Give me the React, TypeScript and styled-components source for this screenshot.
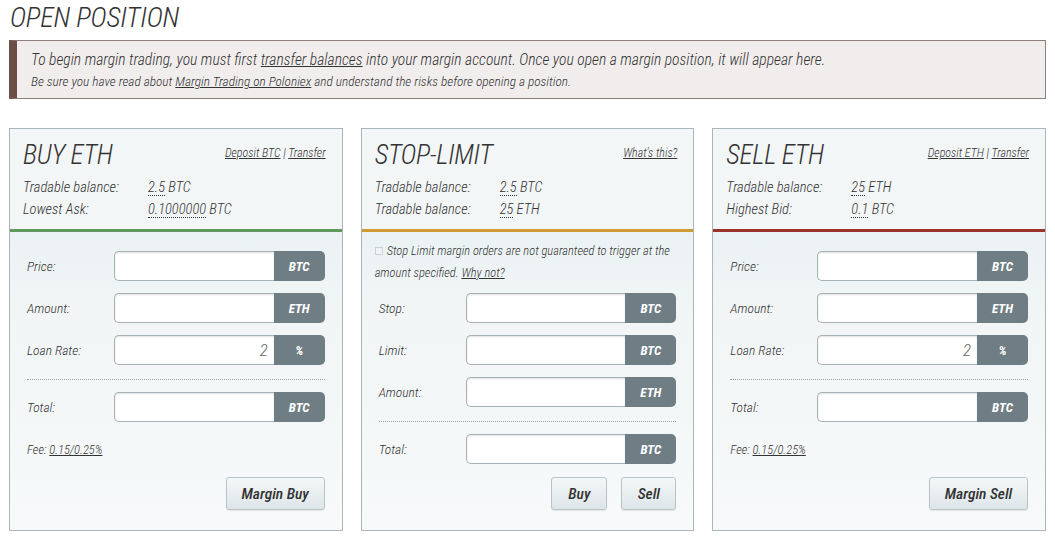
import React from "react";
import styled, { createGlobalStyle } from "styled-components";

const FONT = `"Roboto Condensed", Roboto, "Liberation Sans Narrow", sans-serif`;

const Global = createGlobalStyle`
  html, body { margin: 0; padding: 0; background: #ffffff; }
  body {
    font-family: ${FONT};
    font-stretch: condensed;
    font-style: italic;
    font-weight: 300;
    color: #333;
  }
  * { box-sizing: border-box; }
`;

const Page = styled.div`
  width: 1055px;
  padding: 0 9px 0 9px;
`;

const PageTitle = styled.h1`
  margin: 0;
  padding: 3px 0 0 1px;
  height: 40px;
  font-size: 28px;
  line-height: 30px;
  font-weight: 300;
  font-style: italic;
  text-transform: uppercase;
  letter-spacing: -0.2px;
  color: #333;
`;

const Notice = styled.div`
  height: 59px;
  background: #f1eded;
  border: 1px solid #8d7f7c;
  border-left: 8px solid #6b4e48;
  padding: 9px 14px 0 14px;
`;

const NoticeMain = styled.div`
  font-size: 15.6px;
  line-height: 20px;
`;

const NoticeSub = styled.div`
  font-size: 13.3px;
  line-height: 20px;
  margin-top: 2px;
`;

const Link = styled.a`
  color: #333;
  text-decoration: underline;
  cursor: pointer;
`;

const Panels = styled.div`
  margin-top: 29px;
  display: grid;
  grid-template-columns: repeat(3, 1fr);
  gap: 18px;
  width: 1037px;
`;

const Panel = styled.div`
  height: 403px;
  border: 1px solid #a9b6ba;
  display: flex;
  flex-direction: column;
  background: linear-gradient(to bottom, #e2eef0 0%, #f1f5f6 45%, #f7f9fa 100%);
`;

const Head = styled.div<{ $accent: string }>`
  height: 103px;
  background: #f3f6f7;
  border-bottom: 3px solid ${(p) => p.$accent};
  padding: 11px 16px 0 13px;
`;

const HeadTop = styled.div`
  display: flex;
  justify-content: space-between;
  align-items: center;
  height: 30px;
  margin-bottom: 7px;
`;

const PanelTitle = styled.h2`
  margin: 0;
  font-size: 27px;
  line-height: 30px;
  font-weight: 300;
  font-style: italic;
  letter-spacing: -0.3px;
`;

const HeadLinks = styled.div`
  font-size: 12px;
  margin-top: -4px;
`;

const BalRow = styled.div`
  display: flex;
  font-size: 14.5px;
  line-height: 22px;
`;

const BalLabel = styled.span`
  width: 125px;
`;

const Dotted = styled.span`
  border-bottom: 1px dotted #333;
  line-height: 15px;
  display: inline-block;
`;

const Body = styled.div<{ $top: number }>`
  flex: 1;
  display: flex;
  flex-direction: column;
  padding: ${(p) => p.$top}px 17px 0 17px;
`;

const Row = styled.div`
  display: flex;
  align-items: center;
  height: 30px;
  margin-bottom: 12px;
`;

const Label = styled.span`
  width: 87px;
  font-size: 13.5px;
`;

const InputGroup = styled.div`
  flex: 1;
  display: flex;
  height: 30px;
`;

const Field = styled.div`
  flex: 1;
  background: #fff;
  border: 1px solid #a6b1b5;
  border-right: none;
  border-radius: 5px 0 0 5px;
  box-shadow: inset 0 1px 2px rgba(0, 0, 0, 0.12);
  font-size: 17px;
  color: #666;
  text-align: right;
  padding: 3px 6px 0 0;
  line-height: 22px;
`;

const Addon = styled.div`
  width: 51px;
  background: #6f7d84;
  border-radius: 0 5px 5px 0;
  color: #fff;
  font-weight: 700;
  font-style: italic;
  font-size: 13px;
  display: flex;
  align-items: center;
  justify-content: center;
`;

const Separator = styled.div`
  border-top: 1px dotted #9aa6ab;
  margin: 2px 0 12px 0;
`;

const Fee = styled.div`
  font-size: 12.5px;
  margin-top: 5px;
  height: 22px;
  line-height: 22px;
`;

const Actions = styled.div<{ $top: number }>`
  display: flex;
  justify-content: flex-end;
  gap: 14px;
  margin-top: ${(p) => p.$top}px;
`;

const Button = styled.button<{ $w: number }>`
  width: ${(p) => p.$w}px;
  height: 33px;
  border: 1px solid #b9c4c9;
  border-radius: 3px;
  background: linear-gradient(to bottom, #f4f7f8 0%, #dde5e8 100%);
  box-shadow: 0 1px 1px rgba(0, 0, 0, 0.08);
  font-family: ${FONT};
  font-stretch: condensed;
  font-style: italic;
  font-weight: 500;
  font-size: 15.5px;
  color: #333;
  padding: 0;
`;

const Note = styled.div`
  font-size: 12.5px;
  line-height: 22px;
  margin: -11px 0 9px -4px;
`;

const NoWrap = styled.span`
  white-space: nowrap;
`;

const Check = styled.span`
  display: inline-block;
  width: 8px;
  height: 8px;
  border: 1px solid #c9d2d5;
  background: #eef3f4;
  margin-right: 4px;
  vertical-align: 0px;
`;

type FieldSpec = { label: string; unit: string; value?: string };

const InputRow = ({ f }: { f: FieldSpec }) => (
  <Row>
    <Label>{f.label}</Label>
    <InputGroup>
      <Field>{f.value ?? ""}</Field>
      <Addon>{f.unit}</Addon>
    </InputGroup>
  </Row>
);

const Header = ({
  title,
  accent,
  links,
  rows,
}: {
  title: string;
  accent: string;
  links: React.ReactNode;
  rows: [string, string, string][];
}) => (
  <Head $accent={accent}>
    <HeadTop>
      <PanelTitle>{title}</PanelTitle>
      <HeadLinks>{links}</HeadLinks>
    </HeadTop>
    {rows.map(([l, n, u], i) => (
      <BalRow key={i}>
        <BalLabel>{l}</BalLabel>
        <span>
          <Dotted>{n}</Dotted> {u}
        </span>
      </BalRow>
    ))}
  </Head>
);

const TradePanel = ({
  title,
  accent,
  coin,
  rows,
  second,
  button,
}: {
  title: string;
  accent: string;
  coin: string;
  rows: [string, string, string][];
  second: FieldSpec;
  button: string;
}) => (
  <Panel>
    <Header
      title={title}
      accent={accent}
      rows={rows}
      links={
        <>
          <Link>Deposit {coin}</Link> | <Link>Transfer</Link>
        </>
      }
    />
    <Body $top={19}>
      <InputRow f={{ label: "Price:", unit: "BTC" }} />
      <InputRow f={second} />
      <InputRow f={{ label: "Loan Rate:", unit: "%", value: "2" }} />
      <Separator />
      <InputRow f={{ label: "Total:", unit: "BTC" }} />
      <Fee>
        Fee: <Link>0.15/0.25%</Link>
      </Fee>
      <Actions $top={16}>
        <Button $w={99}>{button}</Button>
      </Actions>
    </Body>
  </Panel>
);

export default function App() {
  return (
    <Page>
      <Global />
      <PageTitle>Open Position</PageTitle>
      <Notice>
        <NoticeMain>
          To begin margin trading, you must first <Link>transfer balances</Link> into your margin
          account. Once you open a margin position, it will appear here.
        </NoticeMain>
        <NoticeSub>
          Be sure you have read about <Link>Margin Trading on Poloniex</Link> and understand the
          risks before opening a position.
        </NoticeSub>
      </Notice>
      <Panels>
        <TradePanel
          title="BUY ETH"
          accent="#5e9a5e"
          coin="BTC"
          rows={[
            ["Tradable balance:", "2.5", "BTC"],
            ["Lowest Ask:", "0.1000000", "BTC"],
          ]}
          second={{ label: "Amount:", unit: "ETH" }}
          button="Margin Buy"
        />
        <Panel>
          <Header
            title="STOP-LIMIT"
            accent="#d09a35"
            rows={[
              ["Tradable balance:", "2.5", "BTC"],
              ["Tradable balance:", "25", "ETH"],
            ]}
            links={<Link>What's this?</Link>}
          />
          <Body $top={19}>
            <Note>
              <Check />
              Stop Limit margin orders are not guaranteed to trigger at the{" "}
              <NoWrap>
                amount specified. <Link>Why not?</Link>
              </NoWrap>
            </Note>
            <InputRow f={{ label: "Stop:", unit: "BTC" }} />
            <InputRow f={{ label: "Limit:", unit: "BTC" }} />
            <InputRow f={{ label: "Amount:", unit: "ETH" }} />
            <Separator />
            <InputRow f={{ label: "Total:", unit: "BTC" }} />
            <Actions $top={1}>
              <Button $w={56}>Buy</Button>
              <Button $w={55}>Sell</Button>
            </Actions>
          </Body>
        </Panel>
        <TradePanel
          title="SELL ETH"
          accent="#9c3328"
          coin="ETH"
          rows={[
            ["Tradable balance:", "25", "ETH"],
            ["Highest Bid:", "0.1", "BTC"],
          ]}
          second={{ label: "Amount:", unit: "ETH" }}
          button="Margin Sell"
        />
      </Panels>
    </Page>
  );
}
